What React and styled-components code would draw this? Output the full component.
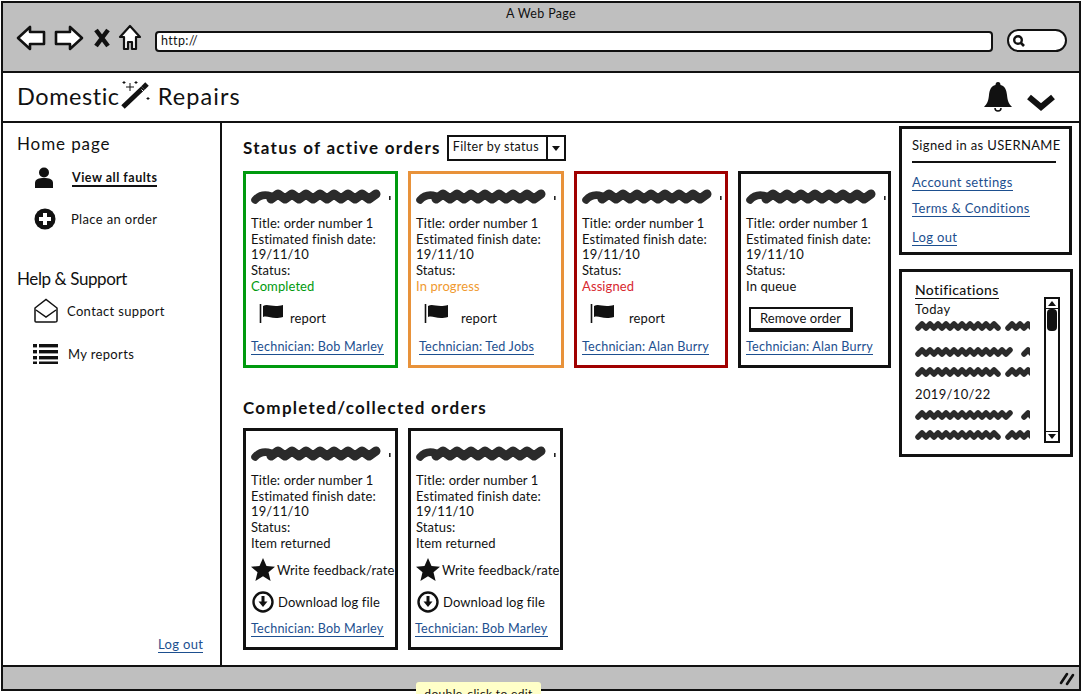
import React from "react";
import styled, { createGlobalStyle } from "styled-components";

const Global = createGlobalStyle`
  html, body { margin: 0; padding: 0; background: #fff; height: 694px; overflow: hidden; }
  * { box-sizing: border-box; }
  body { font-family: "Lato", "Open Sans", sans-serif; color: #111; font-size: 13px; letter-spacing: 0.35px; }
`;

const Frame = styled.div`
  position: relative; width: 1083px; height: 694px; padding: 1px 2px 3px 1px; overflow: hidden;
`;
const Window = styled.div`
  height: 100%; border: 2px solid #111; display: flex; flex-direction: column;
`;
const TitleBar = styled.div`
  height: 70px; flex: none; background: #bfbfbf; border-bottom: 2px solid #111; padding: 3px 13px 0 13px;
`;
const PageTitle = styled.div`
  text-align: center; font-size: 12.5px; line-height: 15px;
`;
const NavRow = styled.div`
  display: flex; align-items: center; margin-top: 3px;
`;
const NavIcons = styled.div`
  display: flex; align-items: center; gap: 8px; width: 139px; flex: none;
`;
const Url = styled.div`
  width: 838px; height: 21px; flex: none; background: #fff; border: 2px solid #111; border-radius: 4px;
  font-size: 12.5px; line-height: 16px; padding-left: 4px; margin-top: 7px;
`;
const Search = styled.div`
  width: 60px; height: 23px; flex: none; margin: 5px 0 0 14px; background: #fff; border: 2px solid #111; border-radius: 12px;
  padding: 3px 0 0 3px; display: flex;
`;
const Header = styled.div`
  height: 50px; flex: none; display: flex; align-items: center; border-bottom: 2px solid #111; padding: 0 23px 0 14px;
`;
const Logo = styled.div`
  font-size: 23.5px; line-height: 30px; display: flex; align-items: center; letter-spacing: 0.55px; flex: 1; margin-bottom: 2px;
`;
const Repairs = styled.span`
  letter-spacing: 1.1px;
`;
const Body = styled.div`
  flex: 1; min-height: 0; display: flex;
`;
const Sidebar = styled.div`
  width: 219px; flex: none; border-right: 2px solid #111; padding: 11px 0 12px 14px; display: flex; flex-direction: column;
`;
const SideTitle = styled.div`
  font-size: 17px; line-height: 20px; letter-spacing: ${p => p.$sp}px; margin-top: ${p => p.$top || 0}px;
`;
const SideItem = styled.div`
  display: flex; align-items: center; height: 24px; margin-top: ${p => p.$top}px; padding-left: ${p => p.$pad}px;
`;
const SideIcon = styled.span`
  width: ${p => p.$w}px; flex: none; display: flex;
`;
const ActiveLink = styled.span`
  font-weight: 700; border-bottom: 2px solid #111; line-height: 15px; font-size: 12.5px; letter-spacing: 0.5px;
`;
const SideLogout = styled.a`
  margin-top: auto; margin-left: 141px; align-self: flex-start; white-space: nowrap; color: #1d4f8f; border-bottom: 1px solid #1d4f8f; line-height: 15px;
`;
const Main = styled.div`
  flex: 1; min-width: 0; padding: 12px 0 0 21px;
`;
const SectionHead = styled.div`
  display: flex; align-items: center; height: 26px; gap: 6px;
`;
const Heading = styled.h2`
  margin: ${p => p.$top || 0}px 0 0; font-size: 17px; line-height: 22px; font-weight: 700; letter-spacing: 1.27px;
`;
const Filter = styled.div`
  width: 119px; height: 26px; display: flex; border: 2px solid #111; font-size: 12.5px; line-height: 20px; background: #fff;
`;
const FilterLabel = styled.div`
  flex: 1; padding-left: 4px; border-right: 2px solid #111;
`;
const FilterArrow = styled.div`
  width: 16px; display: flex; align-items: center; justify-content: center;
  &::after { content: ""; border: 4.5px solid transparent; border-top: 5px solid #111; margin-top: 5px; }
`;
const CardRow = styled.div`
  display: flex; gap: 10px; margin-top: ${p => p.$top}px;
`;
const Card = styled.div`
  width: ${p => p.$w}px; height: ${p => p.$h}px; flex: none; border: 3px solid ${p => p.$c}; padding: 14px 0 0 5px;
  display: flex; flex-direction: column; position: relative; letter-spacing: 0.1px;
`;
const Info = styled.div`
  line-height: 15.7px; margin-top: 11px; white-space: nowrap;
`;
const StatusText = styled.div`
  color: ${p => p.$c};
`;
const ReportRow = styled.div`
  display: flex; align-items: flex-end; height: 24px; margin-top: 8px; padding-left: 8px; gap: ${p => p.$gap}px;
`;
const ReportLabel = styled.span`
  line-height: 15px; margin-bottom: 1px;
`;
const RemoveBtn = styled.div`
  width: 104px; height: 25px; margin: 12px 0 0 3px; border: 2px solid #111; border-right-width: 3px; border-bottom-width: 4px;
  text-align: center; line-height: 18px; background: #fff;
`;
const TechLink = styled.a`
  position: absolute; bottom: 10px; left: ${p => p.$left || 5}px; color: #1d4f8f; border-bottom: 1px solid #1d4f8f;
  line-height: 15px; white-space: nowrap; font-size: 12.6px; letter-spacing: 0.2px;
`;
const ActionRow = styled.div`
  display: flex; align-items: center; height: 24px; margin-top: ${p => p.$top}px; gap: ${p => p.$gap}px;
  padding-left: ${p => p.$pad || 0}px; white-space: nowrap;
`;
const RightCol = styled.div`
  width: 180px; flex: none; padding: 3px 0 0 0; display: flex; flex-direction: column;
`;
const AccountBox = styled.div`
  width: 173px; height: 129px; border: 3px solid #111; padding: 8px 0 0 10px; display: flex; flex-direction: column; align-items: flex-start;
`;
const Signed = styled.div`
  line-height: 16px; white-space: nowrap;
`;
const Rule = styled.div`
  width: 144px; height: 2px; background: #111; margin: 8px 0 12px;
`;
const BoxLink = styled.a`
  color: #1d4f8f; border-bottom: 1px solid #1d4f8f; line-height: 15px; margin-bottom: ${p => p.$mb}px;
`;
const NotifBox = styled.div`
  width: 174px; height: 188px; margin-top: 14px; border: 3px solid #111; padding: 9px 0 0 13px; position: relative;
`;
const NotifTitle = styled.span`
  font-size: 14px; line-height: 17px; border-bottom: 1px solid #111; display: inline-block; font-weight: 500;
`;
const NotifList = styled.div`
  display: flex; flex-direction: column; width: 115px; overflow: hidden;
`;
const NotifDate = styled.div`
  line-height: 16px; margin: ${p => p.$top}px 0 0 0;
`;
const Ink = styled.div`
  height: 12px; margin-top: ${p => p.$top}px; display: flex;
`;
const Scrollbar = styled.div`
  position: absolute; top: 25px; right: 10px; width: 16px; height: 146px; border: 2px solid #111;
  display: flex; flex-direction: column; justify-content: space-between; background: #fff;
`;
const ScrollBtn = styled.div`
  height: 10px; display: flex; align-items: center; justify-content: center;
  border-${p => (p.$up ? "bottom" : "top")}: 1px solid #111;
  &::after { content: ""; border: 4px solid transparent;
    ${p => (p.$up ? "border-bottom: 5px solid #111; margin-bottom: 4px;" : "border-top: 5px solid #111; margin-top: 4px;")} }
`;
const Thumb = styled.div`
  position: absolute; top: 10px; left: 1px; width: 10px; height: 22px; background: #111; border-radius: 4px;
`;
const Footer = styled.div`
  height: 24px; flex: none; background: #bfbfbf; border-top: 2px solid #111; display: flex; justify-content: flex-end; align-items: center; padding-right: 4px;
`;
const Tip = styled.div`
  position: absolute; left: 416px; top: 682px; width: 125px; height: 30px; background: #ffffc8; border-radius: 3px 3px 0 0;
  text-align: center; font-size: 12px; line-height: 20px; padding-top: 2px; white-space: nowrap;
`;

const zig = (x0, x1, step, lo, hi) => {
  let d = `M${x0} ${hi}`;
  let up = true;
  for (let x = x0 + step; x < x1; x += step) {
    d += ` L${x} ${up ? lo : hi}`;
    up = !up;
  }
  return d;
};
const Scribble = () => (
  <svg width="142" height="17" viewBox="0 0 142 17" style={{ flex: "none", display: "block" }}>
    <path d="M4 12 Q10 5 20 8" fill="none" stroke="#2b2b2b" strokeWidth="7.5" strokeLinecap="round" />
    <path d={zig(20, 128, 7, 6, 11)} fill="none" stroke="#2b2b2b" strokeWidth="9" strokeLinecap="round" strokeLinejoin="round" />
    <rect x="138" y="8" width="1.6" height="4" fill="#222" />
  </svg>
);
const MiniScribble = ({ long }) => (
  <svg width="115" height="12" viewBox="0 0 115 12" style={{ flex: "none", display: "block" }}>
    <path d={zig(3, long ? 98 : 84, 4, 4, 8)} fill="none" stroke="#2b2b2b" strokeWidth="5.5" strokeLinecap="round" strokeLinejoin="round" />
    <path d={zig(long ? 109 : 93, 120, 4, 4, 8)} fill="none" stroke="#2b2b2b" strokeWidth="5.5" strokeLinecap="round" strokeLinejoin="round" />
  </svg>
);

const Back = ({ flip }) => (
  <svg width="30" height="26" viewBox="0 0 30 26" style={flip ? { transform: "scaleX(-1)" } : undefined}>
    <path d="M2 13 L14 2 L14 7 L28 7 L28 19 L14 19 L14 24 Z" fill="#fff" stroke="#111" strokeWidth="2.6" strokeLinejoin="round" />
  </svg>
);
const Cross = () => (
  <svg width="16" height="20" viewBox="0 0 16 20" style={{ marginLeft: 2 }}><path d="M2 2 L14 18 M14 2 L2 18" stroke="#111" strokeWidth="4.5" /></svg>
);
const Home = () => (
  <svg width="24" height="28" viewBox="0 0 24 28">
    <path d="M12 2 L22 13 L18 13 L18 25 L14 25 L14 18 L10 18 L10 25 L6 25 L6 13 L2 13 Z" fill="#fff" stroke="#111" strokeWidth="2.2" strokeLinejoin="round" />
  </svg>
);
const Lens = () => (
  <svg width="14" height="14" viewBox="0 0 14 14"><circle cx="6" cy="6" r="3.8" fill="none" stroke="#111" strokeWidth="2.4" /><path d="M9 9 L12 12" stroke="#111" strokeWidth="2.6" /></svg>
);
const Wand = () => (
  <svg width="30" height="32" viewBox="0 0 30 32" style={{ margin: "0 7px 0 1px" }}>
    <path d="M2 27 L22 8" stroke="#111" strokeWidth="5" />
    <path d="M22 8 L26 4" stroke="#111" strokeWidth="5" />
    <path d="M20.5 9.5 L24 13" stroke="#fff" strokeWidth="1" />
    <path d="M9 3 V11 M5 7 H13 M3 1 V4 M1.5 2.5 H4.5 M15 1 V4 M13.5 2.5 H16.5 M27 17 V20 M25.5 18.5 H28.5" stroke="#111" strokeWidth="1" />
  </svg>
);
const Bell = () => (
  <svg width="30" height="32" viewBox="0 0 30 32">
    <path d="M15 1 C13 1 12.5 2.5 12.5 4 C8 5 6.5 9 6 14 C5.5 20 4 23 1 26 L29 26 C26 23 24.5 20 24 14 C23.5 9 22 5 17.5 4 C17.5 2.5 17 1 15 1 Z" fill="#111" />
    <path d="M12 27 a3 3 0 0 0 6 0" fill="none" stroke="#111" strokeWidth="1.5" />
  </svg>
);
const Chevron = () => (
  <svg width="30" height="20" viewBox="0 0 30 20" style={{ margin: "10px 0 0 13px" }}>
    <path d="M3 5 L15 15 L27 5" fill="none" stroke="#111" strokeWidth="6" />
  </svg>
);
const Person = () => (
  <svg width="20" height="22" viewBox="0 0 20 22">
    <circle cx="10" cy="5.5" r="5" fill="#111" />
    <path d="M1 21 L1 16 C1 12 5 11 10 11 C15 11 19 12 19 16 L19 21 Z" fill="#111" />
  </svg>
);
const Plus = () => (
  <svg width="22" height="22" viewBox="0 0 22 22">
    <circle cx="11" cy="11" r="10.5" fill="#111" />
    <path d="M11 5 V17 M5 11 H17" stroke="#fff" strokeWidth="4" />
  </svg>
);
const Envelope = () => (
  <svg width="26" height="26" viewBox="0 0 26 26">
    <path d="M2 10 L13 1.5 L24 10 V23 Q24 24 22 24 H3 Q2 24 2 23 Z" fill="none" stroke="#111" strokeWidth="1.5" />
    <path d="M3 12 L13 19 L23 12" fill="none" stroke="#111" strokeWidth="1.5" />
  </svg>
);
const ListIcon = () => (
  <svg width="25" height="20" viewBox="0 0 25 20">
    {[1, 7, 13, 18.5].map(y => (
      <g key={y}><rect x="0" y={y - 1} width="4" height="3.4" fill="#111" /><rect x="6" y={y - 1} width="19" height="3.4" fill="#111" /></g>
    ))}
  </svg>
);
const Flag = () => (
  <svg width="25" height="21" viewBox="0 0 25 21" style={{ flex: "none", marginBottom: 3 }}>
    <path d="M1.5 1 V20" stroke="#111" strokeWidth="1.6" />
    <path d="M4 3 C9 0 13 5 24 2 V14 C13 17 9 12 4 14 Z" fill="#111" />
  </svg>
);
const Star = () => (
  <svg width="24" height="23" viewBox="0 0 24 23" style={{ flex: "none" }}>
    <path d="M12 0 L15.5 8 L24 8.7 L17.5 14.2 L19.6 23 L12 18.2 L4.4 23 L6.5 14.2 L0 8.7 L8.5 8 Z" fill="#111" />
  </svg>
);
const DownCircle = () => (
  <svg width="22" height="22" viewBox="0 0 22 22" style={{ flex: "none" }}>
    <circle cx="11" cy="11" r="9.5" fill="none" stroke="#111" strokeWidth="2.4" />
    <path d="M11 5 V11" stroke="#111" strokeWidth="3" />
    <path d="M6.5 10.5 H15.5 L11 16 Z" fill="#111" />
  </svg>
);
const Grip = () => (
  <svg width="16" height="16" viewBox="0 0 16 16">
    <path d="M2 13 L8 4 M8 14 L14 5" stroke="#111" strokeWidth="2.6" strokeLinecap="round" />
  </svg>
);

const Lines = ({ status, color }) => (
  <Info>
    <div>Title: order number 1</div>
    <div>Estimated finish date:</div>
    <div>19/11/10</div>
    <div>Status:</div>
    <StatusText $c={color || "#111"}>{status}</StatusText>
  </Info>
);

const active = [
  { w: 155, c: "#009a0e", status: "Completed", sc: "#009a0e", tech: "Bob Marley", gap: 6 },
  { w: 156, c: "#e8923a", status: "In progress", sc: "#f09a30", tech: "Ted Jobs", gap: 12, left: 8 },
  { w: 154, c: "#a00000", status: "Assigned", sc: "#d8282f", tech: "Alan Burry", gap: 14 },
  { w: 153, c: "#111", status: "In queue", tech: "Alan Burry", remove: true },
];

export default function App() {
  return (
    <Frame>
      <Global />
      <Window>
        <TitleBar>
          <PageTitle>A Web Page</PageTitle>
          <NavRow>
            <NavIcons>
              <Back /><Back flip /><Cross /><Home />
            </NavIcons>
            <Url>http://</Url>
            <Search><Lens /></Search>
          </NavRow>
        </TitleBar>
        <Header>
          <Logo>Domestic<Wand /><Repairs>Repairs</Repairs></Logo>
          <Bell /><Chevron />
        </Header>
        <Body>
          <Sidebar>
            <SideTitle $sp={0.9}>Home page</SideTitle>
            <SideItem $top={12} $pad={17}><SideIcon $w={38}><Person /></SideIcon><ActiveLink>View all faults</ActiveLink></SideItem>
            <SideItem $top={17} $pad={17}><SideIcon $w={37}><Plus /></SideIcon>Place an order</SideItem>
            <SideTitle $top={38} $sp={-0.4}>Help & Support</SideTitle>
            <SideItem $top={10} $pad={16}><SideIcon $w={34}><Envelope /></SideIcon>Contact support</SideItem>
            <SideItem $top={19} $pad={16}><SideIcon $w={35}><ListIcon /></SideIcon>My reports</SideItem>
            <SideLogout>Log out</SideLogout>
          </Sidebar>
          <Main>
            <SectionHead>
              <Heading>Status of active orders</Heading>
              <Filter><FilterLabel>Filter by status</FilterLabel><FilterArrow /></Filter>
            </SectionHead>
            <CardRow $top={10}>
              {active.map(o => (
                <Card key={o.c} $w={o.w} $h={197} $c={o.c}>
                  <Scribble />
                  <Lines status={o.status} color={o.sc} />
                  {o.remove
                    ? <RemoveBtn>Remove order</RemoveBtn>
                    : <ReportRow $gap={o.gap}><Flag /><ReportLabel>report</ReportLabel></ReportRow>}
                  <TechLink $left={o.left}>Technician: {o.tech}</TechLink>
                </Card>
              ))}
            </CardRow>
            <Heading $top={29}>Completed/collected orders</Heading>
            <CardRow $top={9}>
              {[{}, { left: 4 }].map((o, i) => (
                <Card key={i} $w={155} $h={222} $c="#111">
                  <Scribble />
                  <Info>
                    <div>Title: order number 1</div>
                    <div>Estimated finish date:</div>
                    <div>19/11/10</div>
                    <div>Status:</div>
                    <div>Item returned</div>
                  </Info>
                  <ActionRow $top={6} $gap={2}><Star />Write feedback/rate</ActionRow>
                  <ActionRow $top={8} $gap={4} $pad={1}><DownCircle />Download log file</ActionRow>
                  <TechLink $left={o.left}>Technician: Bob Marley</TechLink>
                </Card>
              ))}
            </CardRow>
          </Main>
          <RightCol>
            <AccountBox>
              <Signed>Signed in as USERNAME</Signed>
              <Rule />
              <BoxLink $mb={10}>Account settings</BoxLink>
              <BoxLink $mb={13}>Terms & Conditions</BoxLink>
              <BoxLink $mb={0}>Log out</BoxLink>
            </AccountBox>
            <NotifBox>
              <NotifTitle>Notifications</NotifTitle>
              <NotifList>
                <NotifDate $top={2}>Today</NotifDate>
                <Ink $top={3}><MiniScribble /></Ink>
                <Ink $top={14}><MiniScribble long /></Ink>
                <Ink $top={8}><MiniScribble /></Ink>
                <NotifDate $top={8}>2019/10/22</NotifDate>
                <Ink $top={7}><MiniScribble long /></Ink>
                <Ink $top={8}><MiniScribble /></Ink>
              </NotifList>
              <Scrollbar>
                <ScrollBtn $up />
                <Thumb />
                <ScrollBtn />
              </Scrollbar>
            </NotifBox>
          </RightCol>
        </Body>
        <Footer><Grip /></Footer>
      </Window>
      <Tip>double-click to edit</Tip>
    </Frame>
  );
}
